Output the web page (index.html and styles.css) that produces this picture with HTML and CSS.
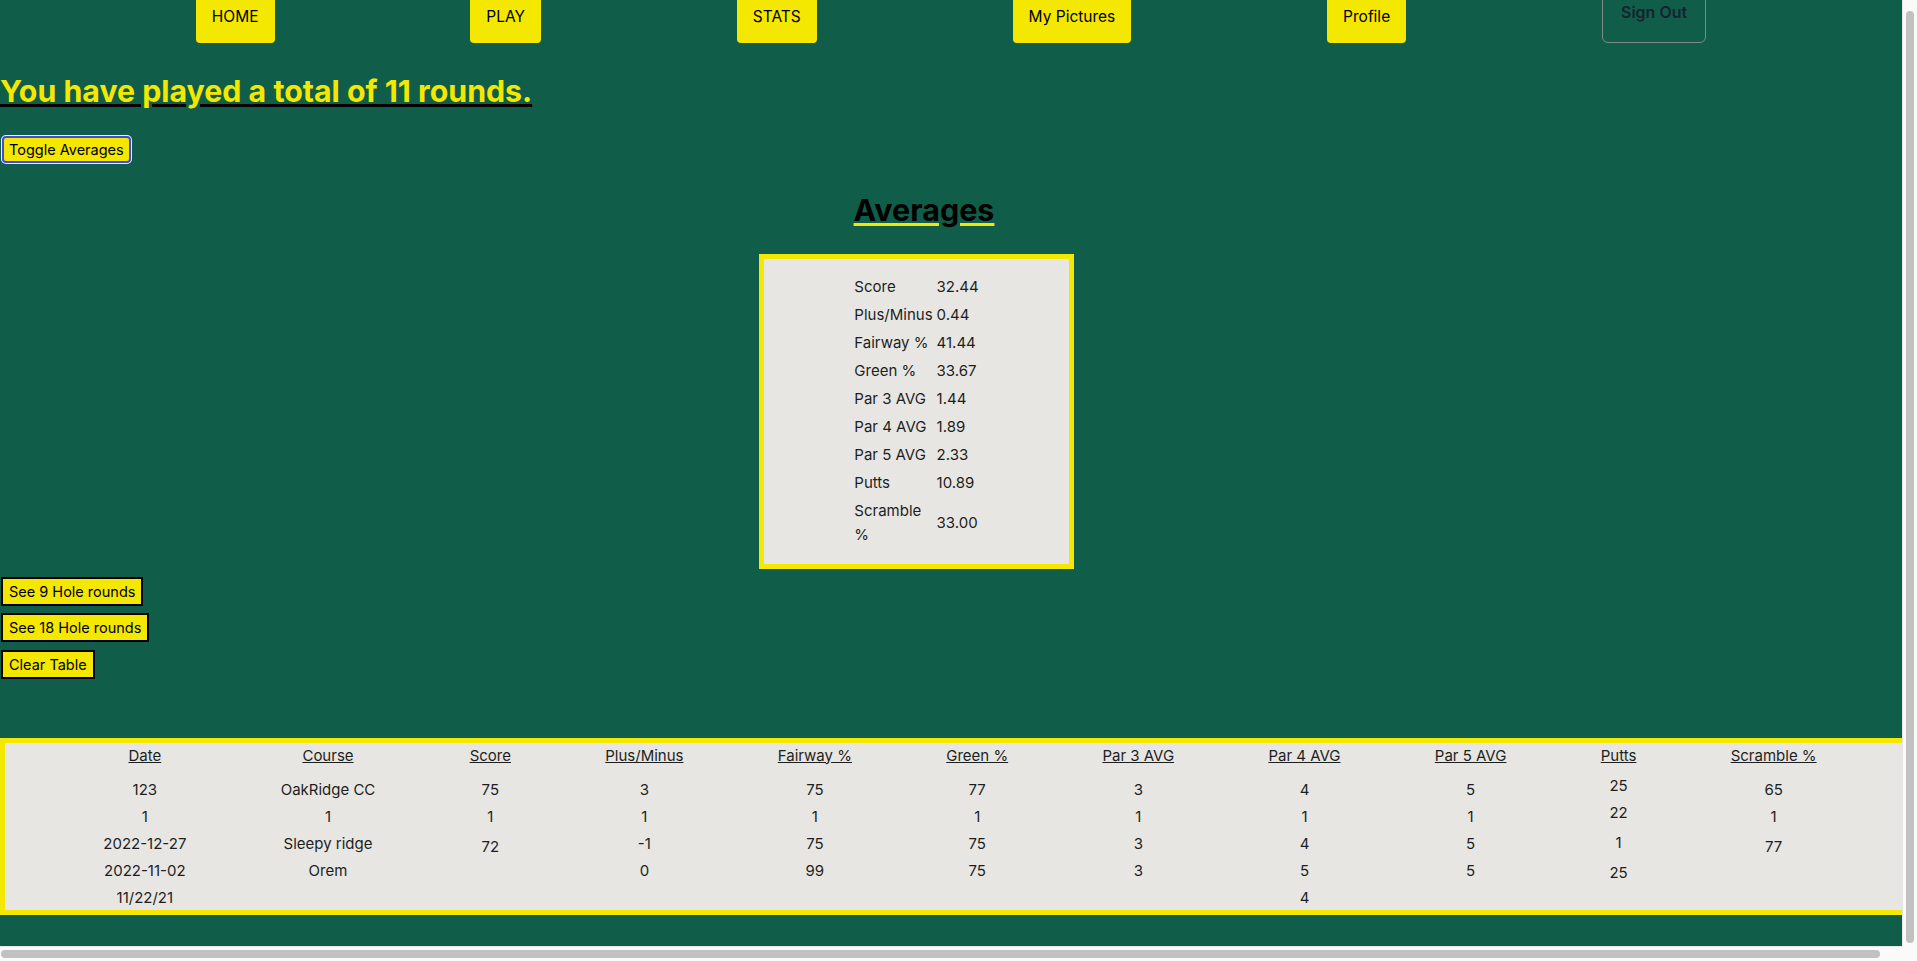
FILE: index.html
```html
<!DOCTYPE html>
<html lang="en">
<head>
<meta charset="utf-8">
<title>Stats</title>
<link rel="stylesheet" href="styles.css">
</head>
<body>
<nav class="nav">
  <button class="nav-btn">HOME</button>
  <button class="nav-btn">PLAY</button>
  <button class="nav-btn">STATS</button>
  <button class="nav-btn">My Pictures</button>
  <button class="nav-btn">Profile</button>
  <button class="signout">Sign Out</button>
</nav>

<h1 class="total">You have played a total of 11 rounds.</h1>

<div class="toggle-row"><button class="toggle">Toggle Averages</button></div>

<section class="averages">
  <h2 class="avg-title">Averages</h2>
  <div class="avg-box">
    <table class="avg-table">
      <tr><td class="lbl">Score</td><td>32.44</td></tr>
      <tr><td class="lbl">Plus/Minus</td><td>0.44</td></tr>
      <tr><td class="lbl">Fairway %</td><td>41.44</td></tr>
      <tr><td class="lbl">Green %</td><td>33.67</td></tr>
      <tr><td class="lbl">Par 3 AVG</td><td>1.44</td></tr>
      <tr><td class="lbl">Par 4 AVG</td><td>1.89</td></tr>
      <tr><td class="lbl">Par 5 AVG</td><td>2.33</td></tr>
      <tr><td class="lbl">Putts</td><td>10.89</td></tr>
      <tr><td class="lbl">Scramble %</td><td>33.00</td></tr>
    </table>
  </div>
</section>

<div class="filters">
  <button class="filter-btn">See 9 Hole rounds</button>
  <button class="filter-btn">See 18 Hole rounds</button>
  <button class="filter-btn">Clear Table</button>
</div>

<div class="rounds">
  <div class="col">
    <div class="col-head">Date</div>
    <div class="vals">
      <div class="val">123</div><div class="val">1</div><div class="val">2022-12-27</div><div class="val">2022-11-02</div><div class="val">11/22/21</div>
    </div>
  </div>
  <div class="col">
    <div class="col-head">Course</div>
    <div class="vals">
      <div class="val">OakRidge CC</div><div class="val">1</div><div class="val">Sleepy ridge</div><div class="val">Orem</div>
    </div>
  </div>
  <div class="col">
    <div class="col-head">Score</div>
    <div class="vals">
      <div class="val">75</div><div class="val">1</div><div class="val low">72</div>
    </div>
  </div>
  <div class="col">
    <div class="col-head">Plus/Minus</div>
    <div class="vals">
      <div class="val">3</div><div class="val">1</div><div class="val">-1</div><div class="val">0</div>
    </div>
  </div>
  <div class="col">
    <div class="col-head">Fairway %</div>
    <div class="vals">
      <div class="val">75</div><div class="val">1</div><div class="val">75</div><div class="val">99</div>
    </div>
  </div>
  <div class="col">
    <div class="col-head">Green %</div>
    <div class="vals">
      <div class="val">77</div><div class="val">1</div><div class="val">75</div><div class="val">75</div>
    </div>
  </div>
  <div class="col">
    <div class="col-head">Par 3 AVG</div>
    <div class="vals">
      <div class="val">3</div><div class="val">1</div><div class="val">3</div><div class="val">3</div>
    </div>
  </div>
  <div class="col">
    <div class="col-head">Par 4 AVG</div>
    <div class="vals">
      <div class="val">4</div><div class="val">1</div><div class="val">4</div><div class="val">5</div><div class="val">4</div>
    </div>
  </div>
  <div class="col">
    <div class="col-head">Par 5 AVG</div>
    <div class="vals">
      <div class="val">5</div><div class="val">1</div><div class="val">5</div><div class="val">5</div>
    </div>
  </div>
  <div class="col">
    <div class="col-head">Putts</div>
    <div class="vals vals-up">
      <div class="val">25</div><div class="val">22</div><div class="val low">1</div><div class="val low">25</div>
    </div>
  </div>
  <div class="col">
    <div class="col-head">Scramble %</div>
    <div class="vals">
      <div class="val">65</div><div class="val">1</div><div class="val low">77</div>
    </div>
  </div>
</div>

<div class="scroll-v"><div class="thumb-v"></div></div>
<div class="scroll-h"><div class="thumb-h"></div></div>
<div class="scroll-corner"></div>
</body>
</html>
```

FILE: styles.css
```css
html {
  overflow: hidden;
}

html, body {
  margin: 0;
  padding: 0;
}

body {
  width: 1902px;
  background: #105e4a;
  font-family: Inter, "Noto Sans", sans-serif;
  font-size: 15px;
  line-height: 1.6;
  color: #213547;
}

/* ---------- nav ---------- */
.nav {
  display: flex;
  justify-content: space-evenly;
  align-items: flex-start;
  margin-top: -11px;
}

.nav-btn {
  font-family: inherit;
  font-size: 15.5px;
  line-height: 24px;
  font-weight: 400;
  color: #000;
  background: #f4e800;
  border: 0;
  border-radius: 4px;
  padding: 16px 16px 14px;
  margin: 0;
}

.signout {
  font-family: inherit;
  font-size: 16px;
  line-height: 24px;
  font-weight: 600;
  color: #18222f;
  background: transparent;
  border: 1px solid #7d8a86;
  border-radius: 6px;
  padding: 10px 18px 18px;
  margin: 0;
}

/* ---------- total ---------- */
.total {
  margin: 26.5px 0 0;
  font-size: 30.3px;
  line-height: 42px;
  font-weight: 700;
  color: #f4e800;
  text-decoration: underline;
  text-decoration-color: #000;
  text-decoration-thickness: 3px;
}

.toggle-row {
  padding-top: 24px;
}

.toggle {
  display: block;
  margin-left: 2px;
  font-family: inherit;
  font-size: 14.5px;
  line-height: 19px;
  color: #000;
  background: #f4e800;
  border: 2px solid #4646e2;
  border-radius: 4px;
  box-shadow: 0 0 0 1px #f4f4ff;
  padding: 2px 5px;
}

/* ---------- averages ---------- */
.averages {
  width: 1833px;
}

.avg-title {
  margin: 23px 0 0;
  padding-left: 15px;
  text-align: center;
  font-size: 30.5px;
  line-height: 48px;
  font-weight: 700;
  color: #000;
  text-decoration: underline;
  text-decoration-color: #f4e800;
  text-decoration-thickness: 3px;
}

.avg-box {
  width: 305px;
  height: 305px;
  margin: 20px auto 0;
  border: 5px solid #f4e800;
  background: #e8e6e3;
  display: flex;
  align-items: center;
  justify-content: center;
}

.avg-table {
  border-spacing: 2px;
  color: #1c1f22;
  line-height: 24px;
}

.avg-table td {
  padding: 1px;
  text-align: left;
  vertical-align: middle;
}

.avg-table td.lbl {
  width: 78px;
}

/* ---------- filter buttons ---------- */
.filters {
  display: flex;
  flex-direction: column;
  align-items: flex-start;
  gap: 7.5px;
  margin-top: 8px;
}

.filter-btn {
  margin-left: 1px;
  height: 29px;
  font-family: inherit;
  font-size: 14.5px;
  line-height: 19px;
  color: #000;
  background: #f4e800;
  border: 2px solid #000;
  border-radius: 0;
  padding: 0 6px;
}

/* ---------- rounds table ---------- */
.rounds {
  display: flex;
  justify-content: space-evenly;
  align-items: flex-start;
  width: 100%;
  margin-top: 59px;
  padding: 1px 4px 0;
  border: 5px solid #f4e800;
  background: #e8e6e3;
  color: #1c1f22;
}

.col {
  display: flex;
  flex-direction: column;
  align-items: center;
  text-align: center;
  white-space: nowrap;
}

.col-head {
  line-height: 24px;
  text-decoration: underline;
}

.vals {
  margin-top: 10px;
  display: flex;
  flex-direction: column;
  align-items: center;
  gap: 3px;
}

.vals-up {
  margin-top: 6px;
}

.val {
  line-height: 24px;
}

.val.low {
  margin-top: 3px;
}

/* ---------- window scrollbars (drawn over the page) ---------- */
.scroll-v {
  position: fixed;
  top: 0;
  right: 0;
  width: 14px;
  height: 946px;
  background: #fafafa;
  border-left: 1px solid #e6e6e6;
}

.thumb-v {
  position: absolute;
  left: 3px;
  top: 11px;
  width: 8px;
  height: 932px;
  border-radius: 4px;
  background: #c1c1c1;
}

.scroll-h {
  position: fixed;
  left: 0;
  bottom: 0;
  width: 1902px;
  height: 14px;
  background: #fafafa;
  border-top: 1px solid #e6e6e6;
}

.thumb-h {
  position: absolute;
  left: 1px;
  top: 3px;
  width: 1879px;
  height: 8px;
  border-radius: 4px;
  background: #c1c1c1;
}

.scroll-corner {
  position: fixed;
  right: 0;
  bottom: 0;
  width: 15px;
  height: 15px;
  background: #fafafa;
}
```
